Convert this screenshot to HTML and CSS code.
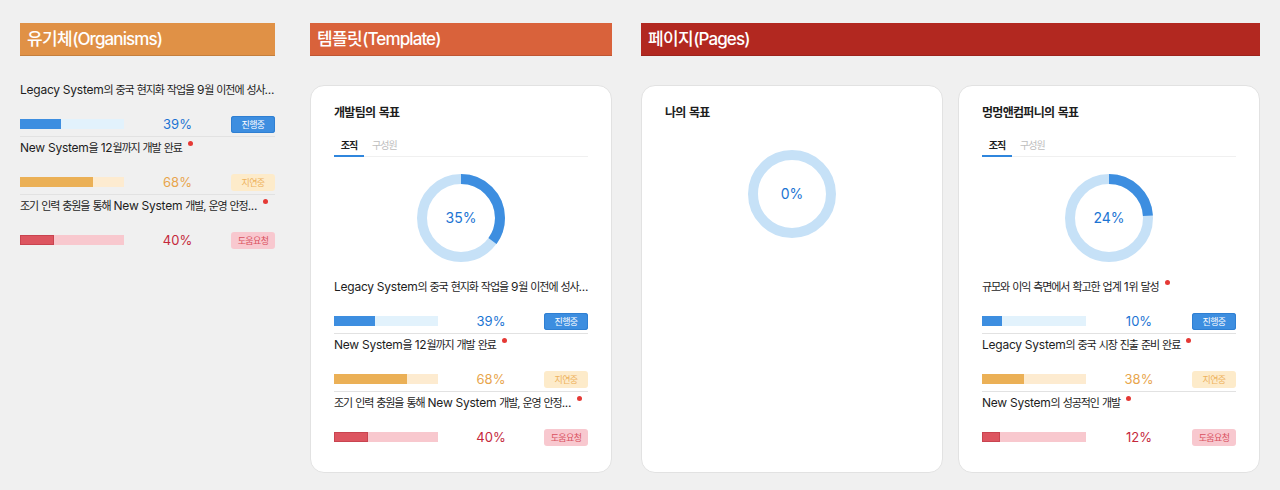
FILE: index.html
```html
<!DOCTYPE html>
<html lang="ko">
<head>
<meta charset="utf-8">
<link rel="stylesheet" href="styles.css">
</head>
<body>
<div class="page">
  <section class="col col-org">
    <div class="head head-org">유기체<span class="en">(Organisms)</span></div>
    <ul class="goals goals-plain">
      <li class="goal">
        <div class="goal-title"><span class="txt"><span class="en">Legacy System</span>의 중국 현지화 작업을 <span class="en">9</span>월 이전에 성사<span class="en">...</span></span></div>
        <div class="goal-row">
          <div class="bar bar-blue"><div class="fill" style="width:39%"></div></div>
          <div class="pct pct-blue">39%</div>
          <div class="badge badge-blue">진행중</div>
        </div>
      </li>
      <li class="goal">
        <div class="goal-title"><span class="txt"><span class="en">New System</span>을 <span class="en">12</span>월까지 개발 완료</span><span class="dot"></span></div>
        <div class="goal-row">
          <div class="bar bar-orange"><div class="fill" style="width:70%"></div></div>
          <div class="pct pct-orange">68%</div>
          <div class="badge badge-orange">지연중</div>
        </div>
      </li>
      <li class="goal">
        <div class="goal-title"><span class="txt">조기 인력 충원을 통해 <span class="en">New System</span> 개발, 운영 안정<span class="en">...</span></span><span class="dot"></span></div>
        <div class="goal-row">
          <div class="bar bar-red"><div class="fill" style="width:33%"></div></div>
          <div class="pct pct-red">40%</div>
          <div class="badge badge-red">도움요청</div>
        </div>
      </li>
    </ul>
  </section>

  <section class="col col-tpl">
    <div class="head head-tpl">템플릿<span class="en">(Template)</span></div>
    <div class="card">
      <h3 class="card-title">개발팀의 목표</h3>
      <div class="tabs"><span class="tab active">조직</span><span class="tab">구성원</span></div>
      <div class="donut">
        <svg viewBox="0 0 88 88" width="88" height="88">
          <circle cx="44" cy="44" r="39" class="track"/>
          <circle cx="44" cy="44" r="39" class="prog" stroke-dasharray="85.77 245.04" transform="rotate(-90 44 44)"/>
        </svg>
        <span class="donut-label">35%</span>
      </div>
      <ul class="goals">
        <li class="goal">
          <div class="goal-title"><span class="txt"><span class="en">Legacy System</span>의 중국 현지화 작업을 <span class="en">9</span>월 이전에 성사<span class="en">...</span></span></div>
          <div class="goal-row">
            <div class="bar bar-blue"><div class="fill" style="width:39%"></div></div>
            <div class="pct pct-blue">39%</div>
            <div class="badge badge-blue">진행중</div>
          </div>
        </li>
        <li class="goal">
          <div class="goal-title"><span class="txt"><span class="en">New System</span>을 <span class="en">12</span>월까지 개발 완료</span><span class="dot"></span></div>
          <div class="goal-row">
            <div class="bar bar-orange"><div class="fill" style="width:70%"></div></div>
            <div class="pct pct-orange">68%</div>
            <div class="badge badge-orange">지연중</div>
          </div>
        </li>
        <li class="goal">
          <div class="goal-title"><span class="txt">조기 인력 충원을 통해 <span class="en">New System</span> 개발, 운영 안정<span class="en">...</span></span><span class="dot"></span></div>
          <div class="goal-row">
            <div class="bar bar-red"><div class="fill" style="width:33%"></div></div>
            <div class="pct pct-red">40%</div>
            <div class="badge badge-red">도움요청</div>
          </div>
        </li>
      </ul>
    </div>
  </section>

  <section class="col col-page">
    <div class="head head-page">페이지<span class="en">(Pages)</span></div>
    <div class="cards">
      <div class="card">
        <h3 class="card-title">나의 목표</h3>
        <div class="donut donut-solo">
          <svg viewBox="0 0 88 88" width="88" height="88">
            <circle cx="44" cy="44" r="39" class="track"/>
          </svg>
          <span class="donut-label">0%</span>
        </div>
      </div>
      <div class="card">
        <h3 class="card-title">멍멍앤컴퍼니의 목표</h3>
        <div class="tabs"><span class="tab active">조직</span><span class="tab">구성원</span></div>
        <div class="donut">
          <svg viewBox="0 0 88 88" width="88" height="88">
            <circle cx="44" cy="44" r="39" class="track"/>
            <circle cx="44" cy="44" r="39" class="prog" stroke-dasharray="58.81 245.04" transform="rotate(-90 44 44)"/>
          </svg>
          <span class="donut-label">24%</span>
        </div>
        <ul class="goals">
          <li class="goal">
            <div class="goal-title"><span class="txt">규모와 이익 측면에서 확고한 업계 <span class="en">1</span>위 달성</span><span class="dot"></span></div>
            <div class="goal-row">
              <div class="bar bar-blue"><div class="fill" style="width:19%"></div></div>
              <div class="pct pct-blue">10%</div>
              <div class="badge badge-blue">진행중</div>
            </div>
          </li>
          <li class="goal">
            <div class="goal-title"><span class="txt"><span class="en">Legacy System</span>의 중국 시장 진출 준비 완료</span><span class="dot"></span></div>
            <div class="goal-row">
              <div class="bar bar-orange"><div class="fill" style="width:40%"></div></div>
              <div class="pct pct-orange">38%</div>
              <div class="badge badge-orange">지연중</div>
            </div>
          </li>
          <li class="goal">
            <div class="goal-title"><span class="txt"><span class="en">New System</span>의 성공적인 개발</span><span class="dot"></span></div>
            <div class="goal-row">
              <div class="bar bar-red"><div class="fill" style="width:17%"></div></div>
              <div class="pct pct-red">12%</div>
              <div class="badge badge-red">도움요청</div>
            </div>
          </li>
        </ul>
      </div>
    </div>
  </section>
</div>
</body>
</html>
```

FILE: styles.css
```css
* { box-sizing: border-box; }
html, body { margin: 0; padding: 0; }
body {
  background: #f0f0f0;
  font-family: Inter, "Noto Sans CJK KR", sans-serif;
  color: #222;
}
.page {
  display: flex;
  align-items: flex-start;
  padding: 23px 20px 0 20px;
}
.col-org { width: 255px; margin-right: 35px; }
.col-tpl { width: 302px; margin-right: 29px; }
.col-page { width: 619px; }

.head {
  height: 33px;
  line-height: 32px;
  padding-left: 7px;
  color: #fff;
  font-size: 17px;
  font-weight: 500;
  border-bottom: 1px solid rgba(0,0,0,0.12);
  letter-spacing: -0.6px;
}
.head .en { letter-spacing: -0.9px; }
.head-org { background: #e09146; }
.head-tpl { background: #d9623b; }
.head-page { background: #b22820; }

.goals { list-style: none; margin: 0; padding: 0; }
.goals-plain { margin-top: 23px; }
.goal {
  height: 58px;
  padding-top: 1px;
  border-bottom: 1px solid #e2e2e2;
}
.goal:last-child { border-bottom: none; }
.goal-title {
  display: flex;
  align-items: flex-start;
  height: 20px;
  line-height: 20px;
  font-size: 11px;
  color: #1d1d1d;
  white-space: nowrap;
  letter-spacing: -1.1px;
  word-spacing: 1.1px;
}
.goal-title .en { font-size: 12px; letter-spacing: -0.25px; word-spacing: 0; }
.dot {
  flex: none;
  width: 5px;
  height: 5px;
  border-radius: 50%;
  background: #e53935;
  margin-left: 6px;
  margin-top: 3px;
}
.goal-row {
  display: flex;
  align-items: center;
  height: 18px;
  margin-top: 15px;
}
.bar {
  width: 104px;
  height: 10px;
  flex: none;
}
.bar .fill { height: 100%; }
.bar-blue { background: #e2f2fc; }
.bar-blue .fill { background: #3d8ee0; }
.bar-orange { background: #fdebd0; }
.bar-orange .fill { background: #ebb056; }
.bar-red { background: #f8c8ce; }
.bar-red .fill { background: #dd5560; border: 1px solid #c94450; }

.pct {
  flex: 1;
  text-align: center;
  font-size: 13px;
  line-height: 18px;
}
.pct-blue { color: #1c74d3; }
.pct-orange { color: #e8a54c; }
.pct-red { color: #c5283b; }

.badge {
  width: 44px;
  height: 17px;
  line-height: 17px;
  border-radius: 3px;
  font-size: 9px;
  text-align: center;
  flex: none;
  letter-spacing: -0.6px;
}
.badge-blue { background: #3d8ee0; color: #fff; box-shadow: inset 0 0 0 1px #2f7fd2; }
.badge-orange { background: #fdebca; color: #eeb25c; }
.badge-red { background: #f8c8cf; color: #d9505e; }

.card {
  background: #fff;
  border: 1px solid #e2e2e2;
  border-radius: 14px;
  height: 388px;
  margin-top: 29px;
  padding: 16px 23px 0 23px;
}
.cards {
  display: flex;
  gap: 15px;
}
.cards .card { flex: 1; }
.card-title {
  margin: 0;
  font-size: 12px;
  font-weight: 600;
  line-height: 22px;
  height: 22px;
  color: #1d1d1d;
  letter-spacing: -0.7px;
  word-spacing: 1px;
}
.tabs {
  display: flex;
  margin-top: 11px;
  border-bottom: 1px solid #f0f0f0;
  height: 22px;
}
.tab {
  font-size: 10px;
  line-height: 20px;
  color: #bdbdbd;
  height: 22px;
  white-space: nowrap;
  letter-spacing: -0.9px;
  padding: 0 6px;
}
.tab.active {
  color: #1d1d1d;
  font-weight: 600;
  border-bottom: 2px solid #2f86dd;
  width: 30px;
  padding: 0;
  text-align: center;
  margin-right: 2px;
}
.donut {
  position: relative;
  width: 88px;
  height: 88px;
  margin: 17px auto 0;
}
.donut svg { display: block; }
.donut-solo { margin-top: 26px; }
.track { fill: none; stroke: #c6e1f7; stroke-width: 10; }
.prog { fill: none; stroke: #3d8ee0; stroke-width: 10; }
.donut-label {
  position: absolute;
  left: 0; right: 0; top: 0;
  line-height: 88px;
  text-align: center;
  font-size: 14px;
  color: #1c74d3;
}
.card .goals { margin-top: 14px; }
```
